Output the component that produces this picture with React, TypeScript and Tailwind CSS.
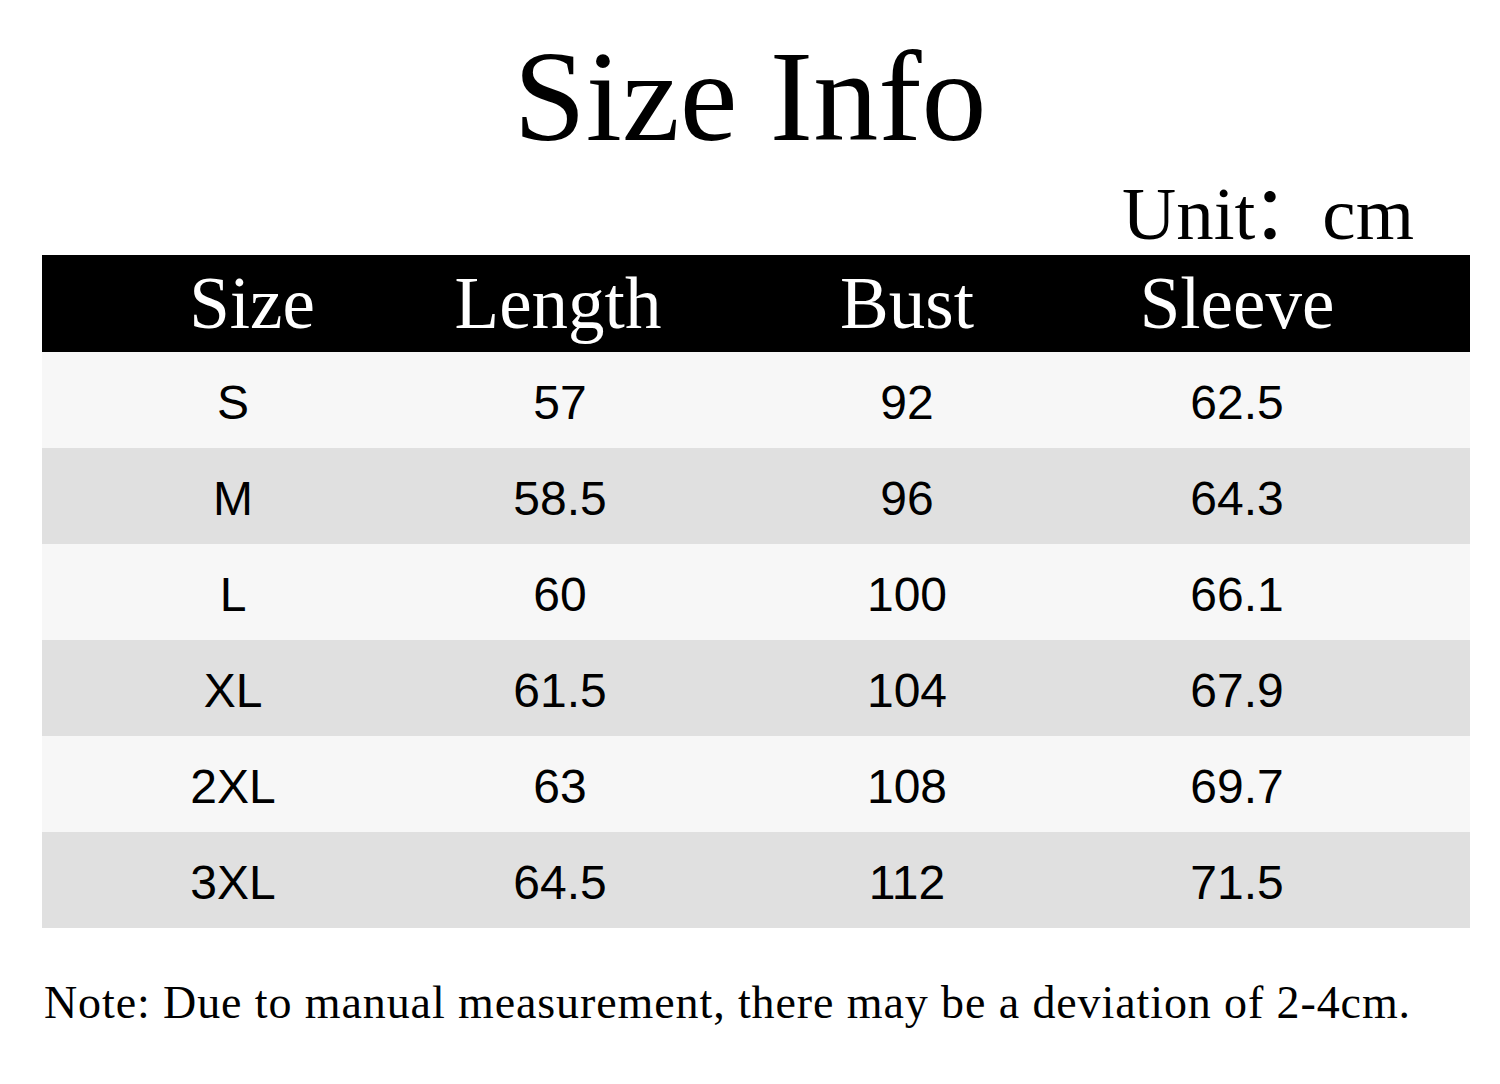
import React from "react";

const rows: string[][] = [
	["S", "57", "92", "62.5"],
	["M", "58.5", "96", "64.3"],
	["L", "60", "100", "66.1"],
	["XL", "61.5", "104", "67.9"],
	["2XL", "63", "108", "69.7"],
	["3XL", "64.5", "112", "71.5"],
];

const serif = "font-['Liberation_Serif','Noto_Sans_CJK_SC',serif]";

const App: React.FC = () => {
	return (
		<div className="w-[1500px] h-[1084px] bg-white overflow-hidden">
			{/* title */}
			<div className={`h-[175px] pt-[31px] text-center ${serif} text-[130px] leading-none text-black`}>
				Size Info
			</div>
			<div className={`h-[80px] pt-[1px] pr-[86px] text-right ${serif} text-[75px] leading-none text-black`}>
				Unit<span className="-mx-[4px]">：</span>cm
			</div>

			{/* table */}
			<div className="mx-[42px] w-[1428px]">
				<div className={`grid grid-cols-[382px_272px_422px_238px_1fr] h-[97px] items-center bg-black text-white ${serif} text-[73px] leading-none`}>
					<div className="text-center pl-[38px]">Size</div>
					<div className="text-center pr-[4px]">Length</div>
					<div className="text-center">Bust</div>
					<div className="text-center">Sleeve</div>
					<div />
				</div>
				{rows.map((r, i) => (
					<div
						key={r[0]}
						className={`grid grid-cols-[382px_272px_422px_238px_1fr] h-[96px] items-center font-['Liberation_Sans',sans-serif] text-[48px] leading-none text-black ${
							i % 2 === 0 ? "bg-[#f7f7f7]" : "bg-[#e0e0e0]"
						}`}
					>
						{r.map((c, j) => (
							<div key={j} className="text-center pt-[6px]">
								{c}
							</div>
						))}
						<div />
					</div>
				))}
			</div>

			{/* note */}
			<div className={`mt-[52px] pl-[44px] ${serif} text-[46px] tracking-[0.9px] leading-none text-black whitespace-nowrap`}>
				Note: Due to manual measurement, there may be a deviation of 2-4cm.
			</div>
		</div>
	);
};

export default App;
